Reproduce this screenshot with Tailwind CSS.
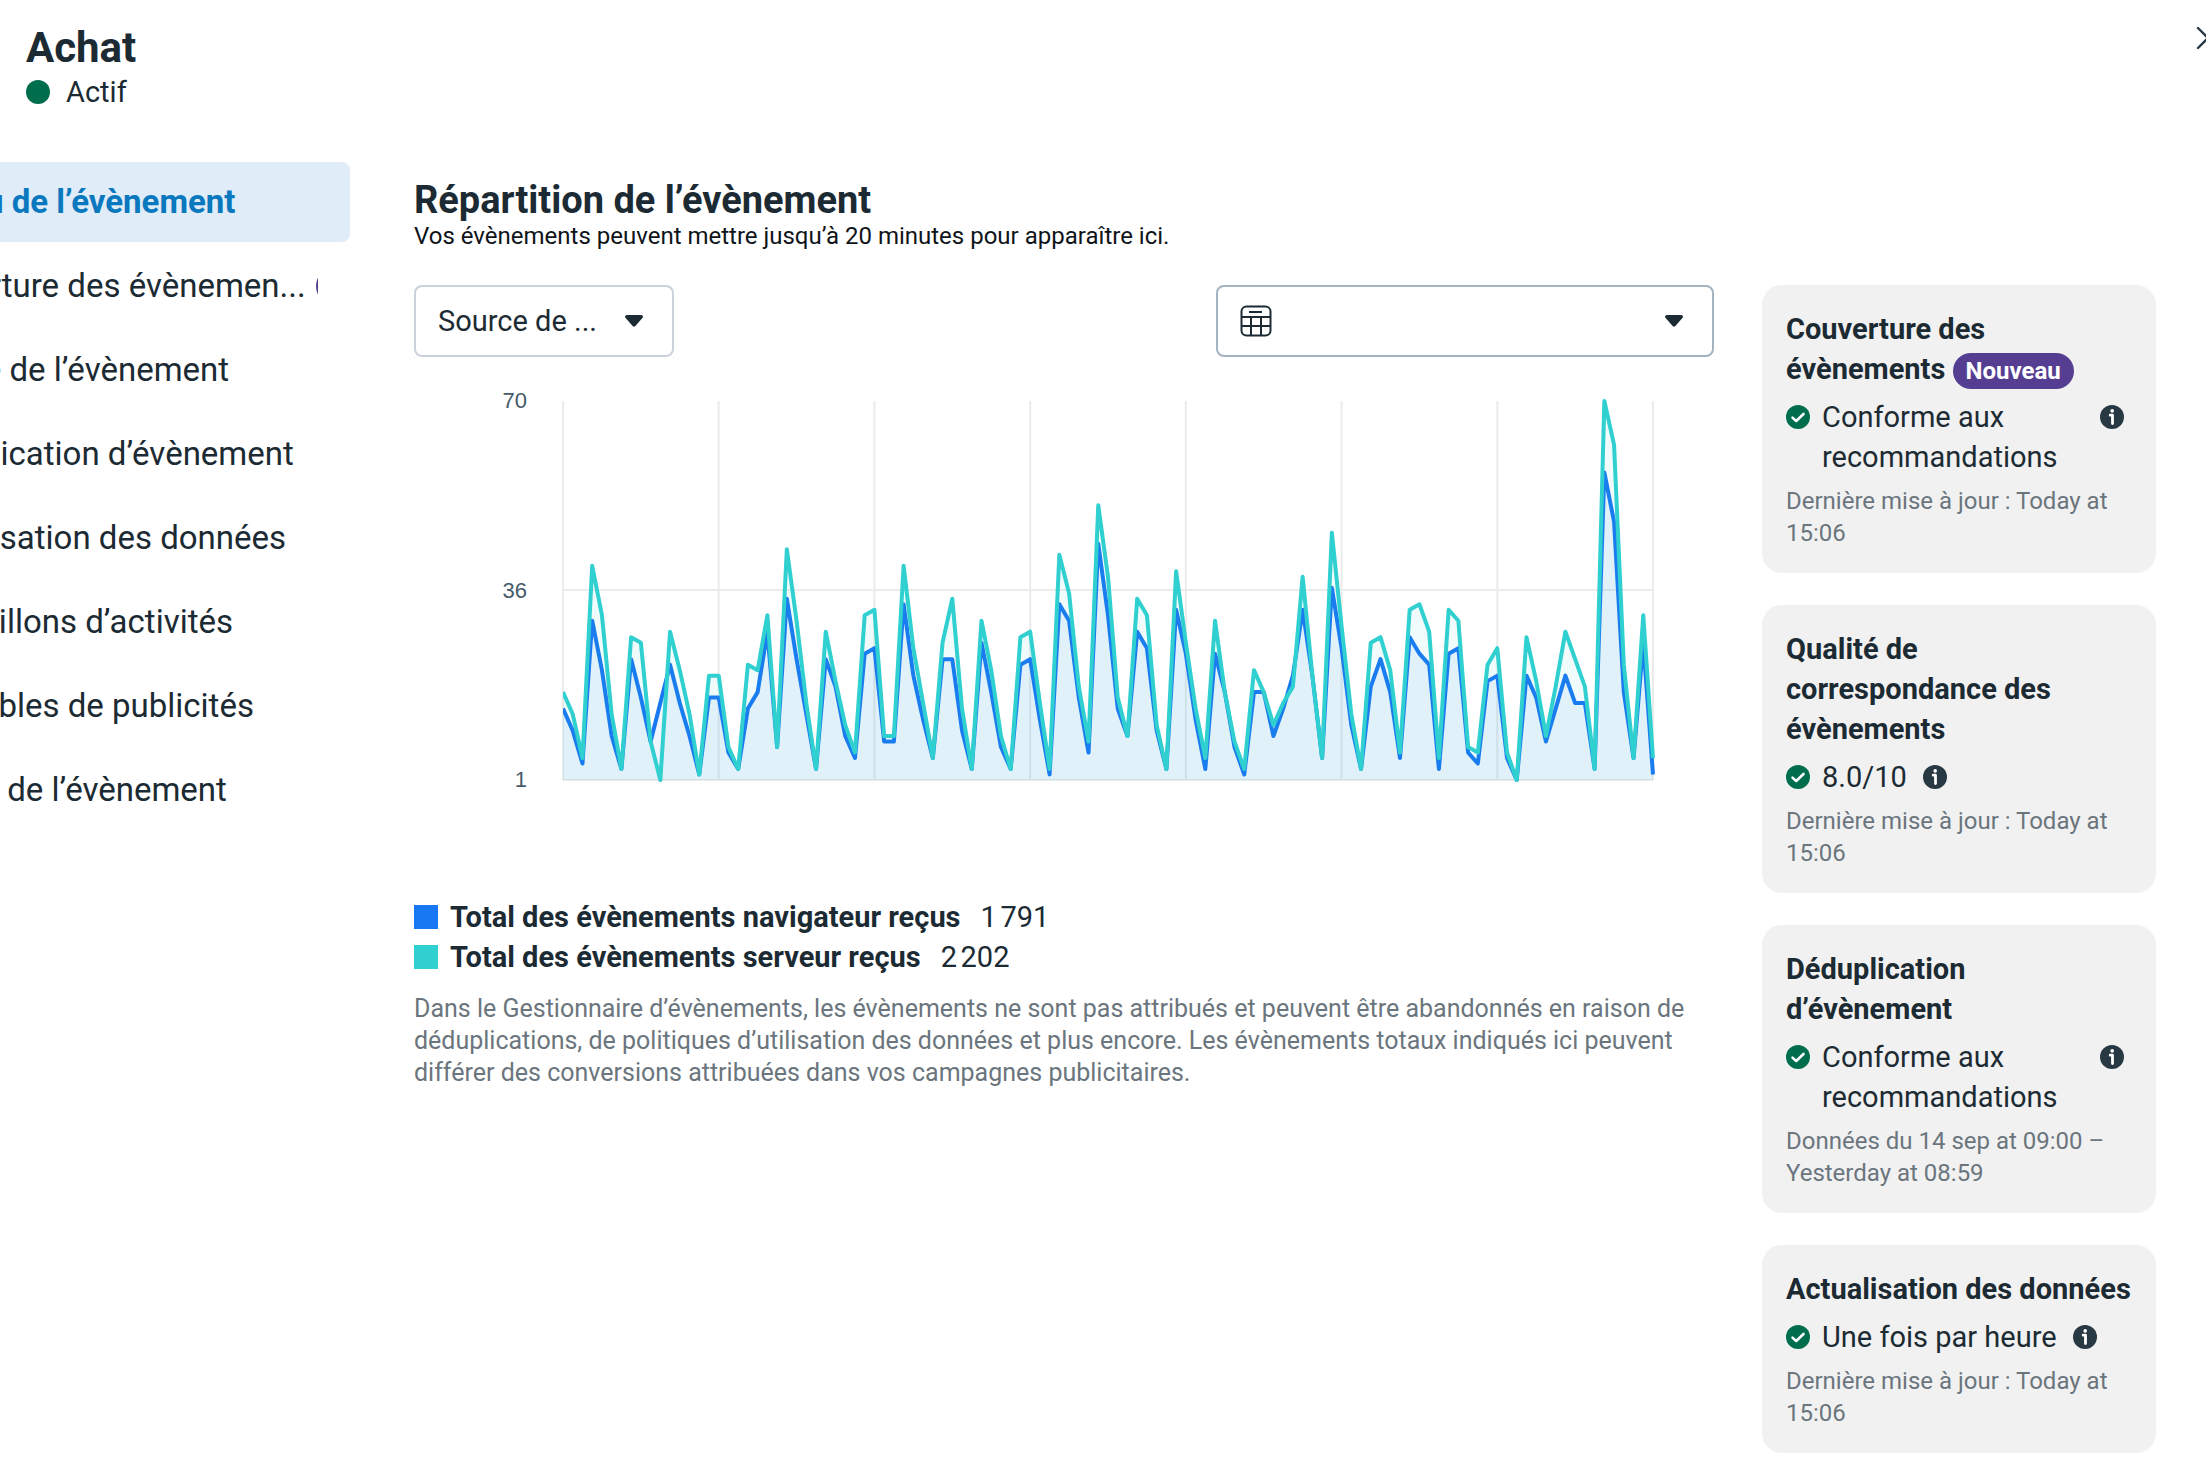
<!DOCTYPE html>
<html lang="fr">
<head>
    <meta charset="UTF-8" />
    <meta name="viewport" content="width=device-width, initial-scale=1.0" />
    <title>Achat | Gestionnaire d’évènements</title>
    <script src="https://cdn.jsdelivr.net/npm/@tailwindcss/browser@4"></script>
</head>

<body class="min-h-screen overflow-x-hidden bg-white font-['Roboto',sans-serif] text-[29px] leading-10 text-[#1c2b33]">

  <!-- Icons -->
  <svg class="hidden" aria-hidden="true">
    <symbol id="icon-check" viewBox="0 0 24 24">
      <circle cx="12" cy="12" r="12" fill="#006d4c" />
      <path d="M6.5 12.6 10.2 16l7.3-7" fill="none" stroke="#fff" stroke-width="2.6" stroke-linecap="round" stroke-linejoin="round" />
    </symbol>
    <symbol id="icon-info" viewBox="0 0 24 24">
      <circle cx="12" cy="12" r="12" fill="#283943" />
      <circle cx="12.2" cy="5.9" r="1.8" fill="#fff" />
      <path d="M10.2 10.2h2.3v8.4" fill="none" stroke="#fff" stroke-width="2.8" stroke-linecap="round" stroke-linejoin="round" />
    </symbol>
    <symbol id="icon-caret" viewBox="0 0 18 12">
      <path d="M2 0h14c1.8 0 2.5 1.9 1.4 3.1l-7 8c-.8.9-2 .9-2.8 0l-7-8C-.5 1.9.2 0 2 0Z" fill="#1c2b33" />
    </symbol>
  </svg>

  <!-- Header -->
  <header class="flex items-start justify-between overflow-hidden pt-6 pl-[26px]">
    <div>
      <h1 class="text-[42px] leading-12 font-bold">Achat</h1>
      <p class="flex items-center gap-4"><span class="size-6 rounded-full bg-[#006d4c]"></span>Actif</p>
    </div>
    <button type="button" aria-label="Fermer" class="-mr-6 p-0.5">
      <svg class="size-8" viewBox="0 0 32 32" fill="none" stroke="#283943" stroke-width="2.4" stroke-linecap="round"><path d="M2 2l20 20M22 2 2 22" /></svg>
    </button>
  </header>

  <div class="mt-[50px] flex items-start">

    <!-- Side navigation -->
    <aside class="w-[350px] shrink-0 overflow-hidden">
      <nav class="-ml-[118px] flex flex-col gap-1 text-[33px]">
        <a href="#" class="flex h-20 items-center rounded-lg bg-[#e0ecf7] pr-8 pl-4 font-bold text-[#0a78be]">Aperçu de l’évènement</a>
        <a href="#" class="flex h-20 items-center pr-8 pl-4">
          <span class="flex overflow-hidden">
            <span class="w-[418px] shrink-0 whitespace-nowrap">Couverture des évènemen...</span>
            <span class="my-0.5 shrink-0 rounded-full bg-[#553e91] px-3 text-2xl leading-9 font-bold text-white">Nouveau</span>
          </span>
        </a>
        <a href="#" class="flex h-20 items-center pr-8 pl-4">Qualité de l’évènement</a>
        <a href="#" class="flex h-20 items-center pr-8 pl-4">Déduplication d’évènement</a>
        <a href="#" class="flex h-20 items-center pr-8 pl-4">Actualisation des données</a>
        <a href="#" class="flex h-20 items-center pr-8 pl-4">Échantillons d’activités</a>
        <a href="#" class="flex h-20 items-center pr-8 pl-4">Ensembles de publicités</a>
        <a href="#" class="flex h-20 items-center pr-8 pl-4">Détails de l’évènement</a>
      </nav>
    </aside>

    <main class="mr-[50px] ml-16 min-w-0 flex-1 pt-4">
      <h2 class="text-[38px] leading-11 font-bold">Répartition de l’évènement</h2>
      <p class="text-2xl leading-7 text-[#0f1419]">Vos évènements peuvent mettre jusqu’à 20 minutes pour apparaître ici.</p>

      <div class="mt-[35px] grid grid-cols-[1fr_394px] items-start gap-12">
        <section>
          <!-- Filters -->
          <div class="flex justify-between">
            <div class="relative w-[260px]">
              <select aria-label="Source de données" class="h-18 w-full appearance-none rounded-lg border-2 border-[#cbd2dc] bg-white pl-[22px] leading-10">
                <option>Source de ...</option>
              </select>
              <svg class="pointer-events-none absolute top-[30px] right-[31px] h-3 w-[18px]"><use href="#icon-caret" /></svg>
            </div>
            <button type="button" aria-label="Période" aria-haspopup="dialog" class="flex h-18 w-[498px] items-center justify-between rounded-lg border-2 border-[#a3b3c0] pr-[29px] pl-[22px]">
              <svg class="size-8" viewBox="0 0 32 32" fill="none" stroke="#1c2b33" stroke-width="2">
                <rect x="1.5" y="1.5" width="29" height="29" rx="5" />
                <path d="M9 7h13M1.5 12h29M1.5 21h29M11 12v18M21 12v18" />
              </svg>
              <svg class="h-3 w-[18px]"><use href="#icon-caret" /></svg>
            </button>
          </div>

          <!-- Chart -->
          <div class="mt-11 mr-[61px] flex gap-9">
            <div class="-my-3 flex w-[113px] flex-col justify-between text-right font-['Liberation_Sans',sans-serif] text-[22px] leading-6 text-[#465a69]">
              <span>70</span><span>36</span><span>1</span>
            </div>
            <svg id="chart" class="h-[379px] min-w-0 flex-1 overflow-visible" viewBox="0 0 112 69" preserveAspectRatio="none" role="img" aria-label="Évènements reçus"></svg>
          </div>

          <!-- Legend -->
          <ul class="mt-[117px]">
            <li class="flex items-center gap-3"><span class="size-6 bg-[#1877f2]"></span><b>Total des évènements navigateur reçus</b><span class="ml-2">1&#8239;791</span></li>
            <li class="flex items-center gap-3"><span class="size-6 bg-[#30cfd0]"></span><b>Total des évènements serveur reçus</b><span class="ml-2">2&#8239;202</span></li>
          </ul>
          <p class="mt-4 text-[25px] leading-8 text-[#6b757d]">Dans le Gestionnaire d’évènements, les évènements ne sont pas attribués et peuvent être abandonnés en raison de déduplications, de politiques d’utilisation des données et plus encore. Les évènements totaux indiqués ici peuvent différer des conversions attribuées dans vos campagnes publicitaires.</p>
        </section>

        <!-- Cards -->
        <div class="flex flex-col gap-8">
          <article class="flex flex-col gap-2 rounded-[20px] bg-[#f1f1f1] p-6">
            <h3 class="font-bold">Couverture des <br>évènements <span class="inline-block rounded-full bg-[#553e91] px-[13px] align-middle text-2xl leading-9 text-white">Nouveau</span></h3>
            <div class="flex items-start pr-2">
              <svg class="my-2 mr-3 size-6 shrink-0"><use href="#icon-check" /></svg>
              <span>Conforme aux recommandations</span>
              <button type="button" aria-label="Informations" class="my-2 ml-4 shrink-0"><svg class="size-6"><use href="#icon-info" /></svg></button>
            </div>
            <p class="text-2xl leading-8 text-[#6b757d]">Dernière mise à jour : Today at 15:06</p>
          </article>

          <article class="flex flex-col gap-2 rounded-[20px] bg-[#f1f1f1] p-6">
            <h3 class="font-bold">Qualité de <br>correspondance des évènements</h3>
            <div class="flex items-start pr-2">
              <svg class="my-2 mr-3 size-6 shrink-0"><use href="#icon-check" /></svg>
              <span>8.0/10</span>
              <button type="button" aria-label="Informations" class="my-2 ml-4 shrink-0"><svg class="size-6"><use href="#icon-info" /></svg></button>
            </div>
            <p class="text-2xl leading-8 text-[#6b757d]">Dernière mise à jour : Today at 15:06</p>
          </article>

          <article class="flex flex-col gap-2 rounded-[20px] bg-[#f1f1f1] p-6">
            <h3 class="font-bold">Déduplication <br>d’évènement</h3>
            <div class="flex items-start pr-2">
              <svg class="my-2 mr-3 size-6 shrink-0"><use href="#icon-check" /></svg>
              <span>Conforme aux recommandations</span>
              <button type="button" aria-label="Informations" class="my-2 ml-4 shrink-0"><svg class="size-6"><use href="#icon-info" /></svg></button>
            </div>
            <p class="text-2xl leading-8 text-[#6b757d]">Données du 14 sep at 09:00 – Yesterday at 08:59</p>
          </article>

          <article class="flex flex-col gap-2 rounded-[20px] bg-[#f1f1f1] p-6">
            <h3 class="font-bold">Actualisation des données</h3>
            <div class="flex items-start pr-2">
              <svg class="my-2 mr-3 size-6 shrink-0"><use href="#icon-check" /></svg>
              <span>Une fois par heure</span>
              <button type="button" aria-label="Informations" class="my-2 ml-4 shrink-0"><svg class="size-6"><use href="#icon-info" /></svg></button>
            </div>
            <p class="text-2xl leading-8 text-[#6b757d]">Dernière mise à jour : Today at 15:06</p>
          </article>
        </div>
      </div>
    </main>
  </div>

  <script>
    const browserEvents = [
      14, 10, 4, 30, 21, 9, 3, 23, 16, 8, 15, 22, 15, 9, 2, 16,
      16, 6, 3, 14, 17, 28, 7, 34, 23, 13, 3, 23, 18, 9, 5, 24,
      25, 8, 8, 33, 20, 12, 5, 23, 23, 10, 3, 26, 17, 7, 3, 22,
      23, 12, 2, 33, 30, 16, 6, 44, 31, 14, 9, 28, 25, 10, 3, 32,
      24, 12, 3, 24, 17, 7, 2, 17, 17, 9, 14, 20, 32, 20, 5, 36,
      25, 11, 3, 18, 23, 17, 5, 27, 24, 22, 3, 24, 25, 6, 4, 19,
      20, 5, 1, 20, 16, 8, 14, 20, 15, 15, 3, 57, 48, 17, 5, 26, 2
    ];
    const serverEvents = [
      17, 13, 5, 40, 31, 13, 3, 27, 26, 8, 1, 28, 21, 13, 2, 20,
      20, 7, 3, 22, 21, 31, 7, 43, 30, 15, 3, 28, 19, 11, 6, 31,
      32, 9, 9, 40, 25, 15, 5, 26, 34, 14, 3, 30, 21, 9, 3, 27,
      28, 15, 3, 42, 35, 18, 8, 51, 38, 16, 9, 34, 31, 11, 3, 39,
      26, 14, 5, 30, 17, 8, 3, 21, 17, 11, 15, 18, 38, 20, 5, 46,
      29, 13, 3, 26, 27, 21, 6, 32, 33, 28, 5, 32, 30, 7, 6, 22,
      25, 6, 1, 27, 19, 9, 18, 28, 23, 18, 3, 70, 62, 22, 5, 31, 5
    ];

    // One unit per point across, one unit per event upwards, from 1 to 70
    function drawSeries(values, color) {
      const points = values.map((value, index) => index + "," + (70 - value)).join(" ");
      return `<polygon points="0,69 ${points} 112,69" fill="${color}" fill-opacity="0.075" />
        <polyline points="${points}" fill="none" stroke="${color}" stroke-width="4" stroke-linejoin="round" vector-effect="non-scaling-stroke" />`;
    }

    let grid = "";
    for (let x = 0; x <= 112; x += 16) {
      grid += `<path d="M${x} 0V69" />`;
    }
    grid += '<path d="M0 34.4H112M0 69H112" />';

    document.getElementById("chart").innerHTML = `
      <clipPath id="plot"><rect x="0" y="-2" width="112.2" height="73" /></clipPath>
      <g stroke="#ebebeb" stroke-width="2">${grid.replaceAll("<path", '<path vector-effect="non-scaling-stroke"')}</g>
      <g clip-path="url(#plot)">${drawSeries(browserEvents, "#1877f2")}${drawSeries(serverEvents, "#30cfd0")}</g>`;
  </script>
</body>
</html>
